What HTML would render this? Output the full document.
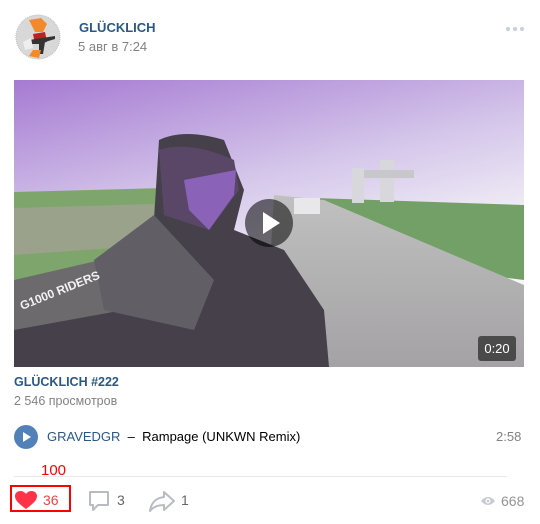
<!DOCTYPE html>
<html><head><meta charset="utf-8"><style>
body{margin:0;background:#fff;font-family:"Liberation Sans",Arial,sans-serif;width:540px;height:524px;position:relative;overflow:hidden}
.a{position:absolute}
</style></head><body>
<svg class="a" style="left:15px;top:14px" width="46" height="46" viewBox="0 0 46 46">
<circle cx="23" cy="23" r="22" fill="#d8d8d8"/><circle cx="23" cy="23" r="22" fill="none" stroke="#bbb" stroke-dasharray="1 1"/>
<path d="M14 6 L26 4 L32 10 L28 18 L20 18 Z" fill="#f08a2a"/>
<path d="M18 20 L30 18 L32 28 L20 30 Z" fill="#c02020"/>
<path d="M14 26 L40 22 L40 25 L30 28 L28 40 L24 40 L24 30 L14 30Z" fill="#333"/>
<path d="M8 28 L16 24 L18 34 L10 36Z" fill="#eee"/>
<path d="M18 36 L26 36 L24 44 L14 42Z" fill="#f08a2a"/>
</svg>
<div class="a" style="left:79px;top:20px;font-size:13px;font-weight:bold;color:#2a5885">GLÜCKLICH</div>
<div class="a" style="left:78px;top:39px;font-size:13px;color:#828282">5 авг в 7:24</div>
<div class="a" style="left:506px;top:27px;font-size:0">
<span style="display:inline-block;width:4px;height:4px;border-radius:2px;background:#c5d0db;margin-right:3px"></span><span style="display:inline-block;width:4px;height:4px;border-radius:2px;background:#c5d0db;margin-right:3px"></span><span style="display:inline-block;width:4px;height:4px;border-radius:2px;background:#c5d0db"></span></div>
<svg class="a" style="left:14px;top:80px" width="510" height="287" viewBox="0 0 510 287">
<defs>
<linearGradient id="sk" x1="0" y1="0" x2="0.4" y2="1"><stop offset="0" stop-color="#a67ad2"/><stop offset="0.45" stop-color="#d4c6ea"/><stop offset="0.8" stop-color="#f6f5f8"/></linearGradient>
<linearGradient id="rd" x1="0" y1="0" x2="0" y2="1"><stop offset="0" stop-color="#c0c0c0"/><stop offset="1" stop-color="#a4a2a4"/></linearGradient>
</defs>
<rect width="510" height="287" fill="url(#sk)"/>
<path d="M0 112 L150 108 L150 180 L0 200Z" fill="#7ea66c"/>
<path d="M0 128 L140 124 L140 165 L0 175Z" fill="#9aa28c"/>
<path d="M300 118 L510 125 L510 200 L430 190 L320 140Z" fill="#72a066"/>
<path d="M260 115 L310 120 L510 205 L510 287 L250 287Z" fill="url(#rd)"/>
<rect x="338" y="88" width="12" height="35" fill="#d8d8dc"/><rect x="366" y="80" width="14" height="42" fill="#d8d8dc"/><rect x="350" y="90" width="50" height="8" fill="#c8c8cc"/>
<rect x="280" y="118" width="26" height="16" fill="#e8e8ea"/>
<path d="M145 60 Q170 48 210 60 L230 110 L220 150 L270 170 L310 230 L315 287 L0 287 L0 230 L90 180 L140 140Z" fill="#45404a"/>
<path d="M145 70 Q175 60 220 80 L225 110 L195 150 L150 135Z" fill="#5a4768"/>
<path d="M170 100 L222 90 L220 115 L195 150 L175 130Z" fill="#8a62b8"/>
<path d="M0 200 L130 170 L110 230 L0 250Z" fill="#6c6a6c"/>
<path d="M80 180 L140 135 L200 200 L180 250 L90 230Z" fill="#625e66"/>
<text x="8" y="230" fill="#f2f2f2" font-size="12" font-weight="bold" transform="rotate(-22 8 230)">G1000 RIDERS</text>
<circle cx="255" cy="143" r="24" fill="rgba(0,0,0,.55)"/>
<path d="M249 132 L249 154 L266 143Z" fill="#fff"/>
<rect x="464" y="256" width="38" height="25" rx="3" fill="rgba(0,0,0,.55)"/>
<text x="483" y="273" fill="#fff" font-size="13" text-anchor="middle" font-family="Liberation Sans">0:20</text>
</svg>
<div class="a" style="left:14px;top:375px;font-size:12.5px;font-weight:bold;color:#2a5885">GLÜCKLICH #222</div>
<div class="a" style="left:14px;top:394px;font-size:12.5px;color:#828282">2 546 просмотров</div>
<svg class="a" style="left:14px;top:425px" width="24" height="24"><circle cx="12" cy="12" r="12" fill="#5181b8"/><path d="M9 7 L9 17 L17 12Z" fill="#fff"/></svg>
<div class="a" style="left:47px;top:429px;font-size:13px;color:#2a5885">GRAVEDGR <span style="color:#000">&nbsp;–&nbsp; Rampage (UNKWN Remix)</span></div>
<div class="a" style="left:496px;top:429px;font-size:13px;color:#828282">2:58</div>
<div class="a" style="left:41px;top:462px;font-size:15px;color:#f00">100</div>
<div class="a" style="left:14px;top:476px;width:493px;height:1px;background:#e7e8ec"></div>
<div class="a" style="left:10px;top:485px;width:61px;height:27px;border:2px solid #f00;box-sizing:border-box"></div>
<svg class="a" style="left:14px;top:490px" width="24" height="20" viewBox="0 0 24 20"><path d="M12 19 C4 13 1 10 1 6 C1 3 3.5 1 6.5 1 C9 1 11 2.5 12 4 C13 2.5 15 1 17.5 1 C20.5 1 23 3 23 6 C23 10 20 13 12 19Z" fill="#ff3347"/></svg>
<div class="a" style="left:43px;top:492px;font-size:14px;color:#e64646">36</div>
<svg class="a" style="left:87px;top:490px" width="24" height="22" viewBox="0 0 24 22"><path d="M3 2 H21 V15 H11 L6 20 V15 H3Z" fill="none" stroke="#b8bcc1" stroke-width="2" stroke-linejoin="round"/></svg>
<div class="a" style="left:117px;top:492px;font-size:14px;color:#656565">3</div>
<svg class="a" style="left:148px;top:489px" width="28" height="24" viewBox="0 0 28 24"><path d="M16 3 L26 12 L16 21 V16 C9 16 5 18 2 22 C3 14 8 9 16 8Z" fill="none" stroke="#b8bcc1" stroke-width="2" stroke-linejoin="round"/></svg>
<div class="a" style="left:181px;top:492px;font-size:14px;color:#656565">1</div>
<svg class="a" style="left:480px;top:495px" width="16" height="12" viewBox="0 0 16 12"><path d="M1 6 Q8 -2 15 6 Q8 14 1 6Z" fill="#c5cbd1"/><circle cx="8" cy="6" r="2.5" fill="#fff"/><circle cx="8" cy="6" r="1.3" fill="#c5cbd1"/></svg>
<div class="a" style="left:501px;top:493px;font-size:14px;color:#939393">668</div>
</body></html>
